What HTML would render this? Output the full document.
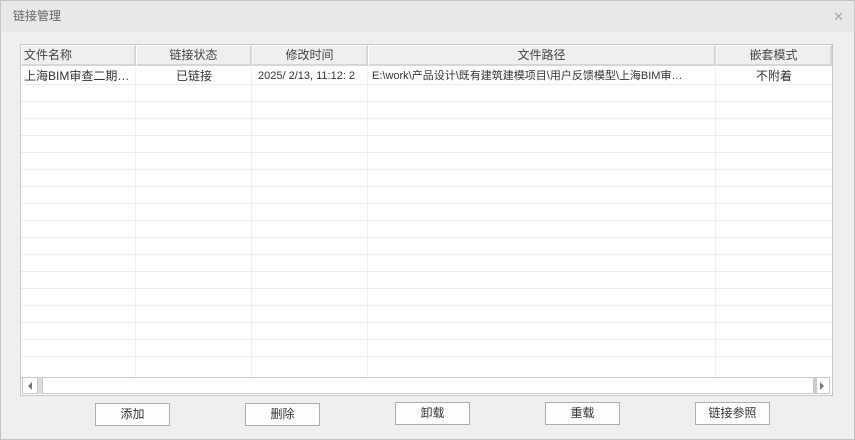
<!DOCTYPE html>
<html><head><meta charset="utf-8"><style>
*{margin:0;padding:0;box-sizing:border-box}
body{width:855px;height:440px;background:#f0f0f0;font-family:"Liberation Sans","Noto Sans CJK SC",sans-serif;font-size:12px;color:#333;position:relative;overflow:hidden}
.win{position:absolute;left:0;top:0;width:855px;height:440px;border:1px solid #c4c4c4;background:#efefef}
.title{position:absolute;left:0;top:0;width:853px;height:31px;background:#e8e8e8;color:#666;font-size:12px;line-height:31px;padding-left:12px}
.x{position:absolute;right:10px;top:0;line-height:31px;color:#aaa;font-size:13px}
.tbl{position:absolute;left:19px;top:43px;width:813px;height:352px;border:1px solid #c8c8c8;background:#fff}
.a{position:absolute;white-space:nowrap}
.hd{position:absolute;top:0;height:21px;background:#efefef;border:1px solid #fff;border-right:2px solid #d6d6d6;border-bottom:2px solid #d6d6d6;line-height:18px;text-align:center;font-size:12px;color:#444}
.hl{position:absolute;left:0;width:811px;height:1px;background:#ececec}
.vl{position:absolute;top:21px;width:1px;height:311px;background:#f0f0f0}
.c{position:absolute;top:22px;line-height:18px;font-size:12px;color:#333;white-space:nowrap}
.btn{position:absolute;width:75px;height:23px;border:1px solid #adadad;background:#fdfdfd;text-align:center;line-height:21px;font-size:12px;color:#333}
</style></head><body>
<div class="win">
<div class="title">链接管理<span class="x">✕</span></div>
<div class="tbl">
<div class="hd" style="left:0;width:115px;text-align:left;padding-left:2px">文件名称</div>
<div class="hd" style="left:115px;width:116px">链接状态</div>
<div class="hd" style="left:231px;width:116px">修改时间</div>
<div class="hd" style="left:347px;width:348px">文件路径</div>
<div class="hd" style="left:695px;width:116px">嵌套模式</div>
<div class="vl" style="left:114px"></div><div class="vl" style="left:230px"></div><div class="vl" style="left:346px"></div><div class="vl" style="left:694px"></div>
<div class="hl" style="top:39px"></div><div class="hl" style="top:56px"></div><div class="hl" style="top:73px"></div><div class="hl" style="top:90px"></div><div class="hl" style="top:107px"></div><div class="hl" style="top:124px"></div><div class="hl" style="top:141px"></div><div class="hl" style="top:158px"></div><div class="hl" style="top:175px"></div><div class="hl" style="top:192px"></div><div class="hl" style="top:209px"></div><div class="hl" style="top:226px"></div><div class="hl" style="top:243px"></div><div class="hl" style="top:260px"></div><div class="hl" style="top:277px"></div><div class="hl" style="top:294px"></div><div class="hl" style="top:311px"></div>
<div class="c" style="left:3px">上海BIM审查二期…</div>
<div class="c" style="left:115px;width:116px;text-align:center">已链接</div>
<div class="c" style="left:237px;font-size:11px">2025/ 2/13, 11:12: 2</div>
<div class="c" style="left:351px;font-size:11px">E:\work\产品设计\既有建筑建模项目\用户反馈模型\上海BIM审…</div>
<div class="c" style="left:695px;width:116px;text-align:center">不附着</div>
<div class="a" style="left:1px;top:332px;width:16px;height:17px;border:1px solid #c8c8c8;background:#fff"><div style="position:absolute;left:5px;top:4px;border-right:4px solid #777;border-top:4px solid transparent;border-bottom:4px solid transparent"></div></div>
<div class="a" style="left:17px;top:332px;width:4px;height:17px;background:#ddd"></div>
<div class="a" style="left:21px;top:332px;width:772px;height:17px;border:1px solid #c8c8c8;background:#fff"></div>
<div class="a" style="left:793px;top:332px;width:16px;height:17px;border:1px solid #c8c8c8;border-left:3px solid #ccc;background:#fff"><div style="position:absolute;left:3px;top:4px;border-left:4px solid #777;border-top:4px solid transparent;border-bottom:4px solid transparent"></div></div>
</div>
<div class="btn" style="left:94px;top:402px">添加</div>
<div class="btn" style="left:244px;top:402px">删除</div>
<div class="btn" style="left:394px;top:401px">卸载</div>
<div class="btn" style="left:544px;top:401px">重载</div>
<div class="btn" style="left:694px;top:401px">链接参照</div>
</div>
</body></html>
